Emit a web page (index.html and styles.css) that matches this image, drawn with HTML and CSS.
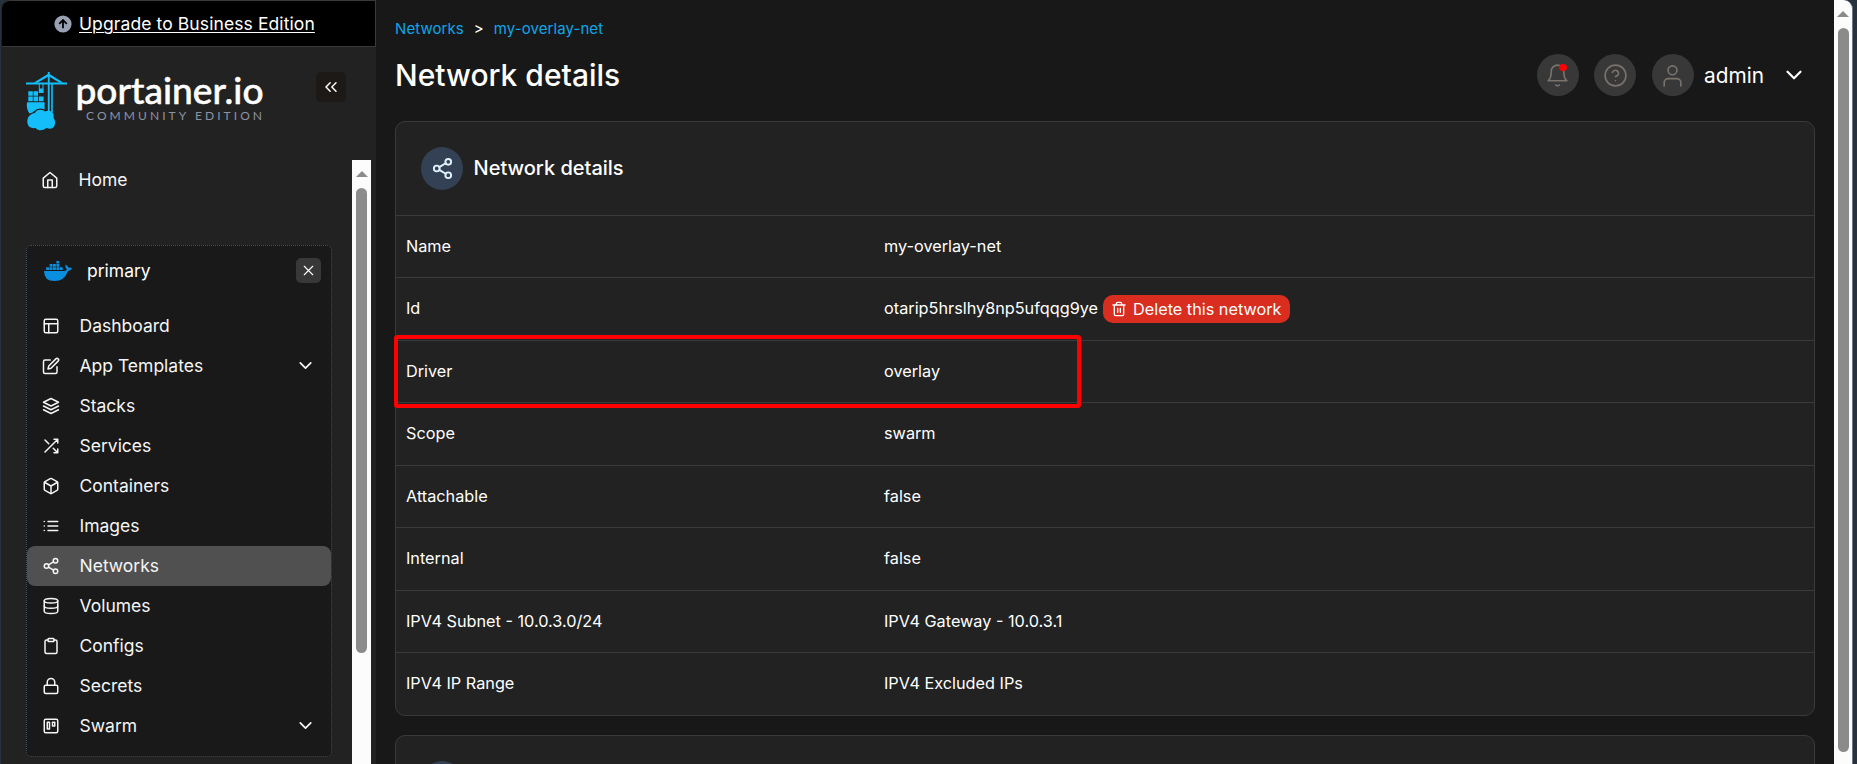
FILE: index.html
```html
<!DOCTYPE html>
<html lang="en">
<head>
<meta charset="utf-8">
<title>Network details</title>
<link rel="stylesheet" href="styles.css">
</head>
<body>
<svg class="defs" aria-hidden="true">
  <symbol id="home" viewBox="0 0 24 24"><path d="M3 9.5 12 2l9 7.5V20a2 2 0 0 1-2 2H5a2 2 0 0 1-2-2Z"/><path d="M9 22V12h6v10"/></symbol>
  <symbol id="layout" viewBox="0 0 24 24"><rect x="3" y="3" width="18" height="18" rx="2"/><path d="M3 9h18M9 21V9"/></symbol>
  <symbol id="edit" viewBox="0 0 24 24"><path d="M11 4H4a2 2 0 0 0-2 2v14a2 2 0 0 0 2 2h14a2 2 0 0 0 2-2v-7"/><path d="M18.5 2.5a2.12 2.12 0 0 1 3 3L12 15l-4 1 1-4Z"/></symbol>
  <symbol id="layers" viewBox="0 0 24 24"><path d="m12 2 10 5-10 5L2 7Z"/><path d="m2 17 10 5 10-5M2 12l10 5 10-5"/></symbol>
  <symbol id="shuffle" viewBox="0 0 24 24"><path d="M16 3h5v5M4 20 21 3M21 16v5h-5M15 15l6 6M4 4l5 5"/></symbol>
  <symbol id="box" viewBox="0 0 24 24"><path d="M21 16V8a2 2 0 0 0-1-1.73l-7-4a2 2 0 0 0-2 0l-7 4A2 2 0 0 0 3 8v8a2 2 0 0 0 1 1.73l7 4a2 2 0 0 0 2 0l7-4A2 2 0 0 0 21 16Z"/><path d="M3.3 7 12 12l8.7-5M12 22V12"/></symbol>
  <symbol id="list" viewBox="0 0 24 24"><path d="M8 6h13M8 12h13M8 18h13M3 6h.01M3 12h.01M3 18h.01"/></symbol>
  <symbol id="share" viewBox="0 0 24 24"><circle cx="18" cy="5" r="3"/><circle cx="6" cy="12" r="3"/><circle cx="18" cy="19" r="3"/><path d="m8.6 13.5 6.8 4M15.4 6.5l-6.8 4"/></symbol>
  <symbol id="database" viewBox="0 0 24 24"><ellipse cx="12" cy="5" rx="9" ry="3"/><path d="M21 12c0 1.66-4 3-9 3s-9-1.34-9-3"/><path d="M3 5v14c0 1.66 4 3 9 3s9-1.34 9-3V5"/></symbol>
  <symbol id="clipboard" viewBox="0 0 24 24"><path d="M16 4h2a2 2 0 0 1 2 2v14a2 2 0 0 1-2 2H6a2 2 0 0 1-2-2V6a2 2 0 0 1 2-2h2"/><rect x="8" y="2" width="8" height="4" rx="1"/></symbol>
  <symbol id="lock" viewBox="0 0 24 24"><rect x="3" y="11" width="18" height="11" rx="2"/><path d="M7 11V7a5 5 0 0 1 10 0v4"/></symbol>
  <symbol id="trello" viewBox="0 0 24 24"><rect x="3" y="3" width="18" height="18" rx="2"/><path d="M7 7h3v9H7ZM14 7h3v5h-3Z"/></symbol>
  <symbol id="chevron" viewBox="0 0 24 24"><path d="m6 9 6 6 6-6"/></symbol>
  <symbol id="chevrons" viewBox="0 0 24 24"><path d="m11 17-5-5 5-5M18 17l-5-5 5-5"/></symbol>
  <symbol id="cross" viewBox="0 0 24 24"><path d="M18 6 6 18M6 6l12 12"/></symbol>
  <symbol id="bell" viewBox="0 0 24 24"><path d="M18 8A6 6 0 0 0 6 8c0 7-3 9-3 9h18s-3-2-3-9M13.73 21a2 2 0 0 1-3.46 0"/></symbol>
  <symbol id="help" viewBox="0 0 24 24"><circle cx="12" cy="12" r="10"/><path d="M9.09 9a3 3 0 0 1 5.83 1c0 2-3 3-3 3M12 17h.01"/></symbol>
  <symbol id="user" viewBox="0 0 24 24"><path d="M20 22v-3a4 4 0 0 0-4-4H8a4 4 0 0 0-4 4v3"/><circle cx="12" cy="7" r="4.3"/></symbol>
  <symbol id="trash" viewBox="0 0 24 24"><path d="M3 6h18M19 6v14a2 2 0 0 1-2 2H7a2 2 0 0 1-2-2V6M8 6V4a2 2 0 0 1 2-2h4a2 2 0 0 1 2 2v2M10 11v6M14 11v6"/></symbol>
</svg>
<div class="window">
  <aside class="sidebar">
    <div class="upgrade">
      <svg class="upgrade-icon" viewBox="0 0 18 18"><circle cx="9" cy="9" r="8.6" fill="#98a2b3"/><path d="M9 13.3V5M5.2 8.8 9 5l3.8 3.8" fill="none" stroke="#000" stroke-width="1.8"/></svg>
      <a>Upgrade to Business Edition</a>
    </div>
    <div class="brand">
      <svg class="logo" viewBox="0 0 250 62">
        <g fill="#13bef9">
          <path d="M21.8 0h1.9v12h-1.9zM0 10.6h41v2H0zM21.8 12h1.9v28h-1.9zM25.2 12h1.6v28h-1.6z"/>
          <path d="M22.7 1.6 37.5 10.8h-4L22.7 4.2 11.5 10.8h-4Z"/>
          <path d="M12.8 12h1v5h-1zM16.5 12h1v5h-1zM12.8 16.6h4.8V21h-4.8z"/>
          <path d="M2.3 19.2h4.5v4.6H2.3zM7.6 19.2H12v4.6H7.6zM2.3 24.6h4.5v4.6H2.3zM7.6 24.6H12v4.6H7.6zM12.8 24.6h4.8v4.6h-4.8z"/>
          <path d="M1 30.2h17.6v7.3Q12 34.8 8 39.2 6.5 41 3.5 41.5 0 37 1 30.2Z"/>
          <path d="M5 42.5Q6.5 41 8.8 41 10 38 14.3 37.8 17.5 37.8 19 39.5 21 38.3 23.5 38.8 28.5 40 27.6 45.5 30.3 50.5 28.2 54.5 25.5 58 20.5 56 17 58.7 13.5 58.2 11 58 9.5 56 3 57 1.5 51.5.5 45 5 42.5Z"/>
        </g>
        <text class="logo-name" x="49.5" y="31.5" textLength="188" lengthAdjust="spacingAndGlyphs">portainer.io</text>
        <text class="logo-edition" x="60" y="48" textLength="176" lengthAdjust="spacing">COMMUNITY EDITION</text>
      </svg>
      <button class="collapse"><svg class="icon"><use href="#chevrons"/></svg></button>
    </div>
    <div class="side-body">
      <nav class="nav">
        <a class="item home"><svg class="icon"><use href="#home"/></svg><span>Home</span></a>
        <div class="env">
          <div class="env-head">
            <svg class="whale" viewBox="0 0 28 21" fill="#0a8fe0"><path d="M0 10h20.5q2-.3 2.4-1.8Q20.5 6 21.8 3.4 24 4.6 24.3 6.6 26.5 6 28 7.3 27 10 23.8 10.2 20.5 20 10.5 20 0 20 0 10Z"/><path d="M2.2 6.2h2.9v2.9H2.2zM5.6 6.2h2.9v2.9H5.6zM9 6.2h2.9v2.9H9zM12.4 6.2h2.9v2.9h-2.9zM15.8 6.2h2.9v2.9h-2.9zM5.6 3h2.9v2.7H5.6zM9 3h2.9v2.7H9zM12.4 3h2.9v2.7h-2.9zM12.4 0h2.9v2.5h-2.9z"/></svg>
            <span class="env-name">primary</span>
            <button class="close"><svg class="icon"><use href="#cross"/></svg></button>
          </div>
          <a class="item"><svg class="icon"><use href="#layout"/></svg><span>Dashboard</span></a>
          <a class="item"><svg class="icon"><use href="#edit"/></svg><span>App Templates</span><svg class="icon more"><use href="#chevron"/></svg></a>
          <a class="item"><svg class="icon"><use href="#layers"/></svg><span>Stacks</span></a>
          <a class="item"><svg class="icon"><use href="#shuffle"/></svg><span>Services</span></a>
          <a class="item"><svg class="icon"><use href="#box"/></svg><span>Containers</span></a>
          <a class="item"><svg class="icon"><use href="#list"/></svg><span>Images</span></a>
          <a class="item active"><svg class="icon"><use href="#share"/></svg><span>Networks</span></a>
          <a class="item"><svg class="icon"><use href="#database"/></svg><span>Volumes</span></a>
          <a class="item"><svg class="icon"><use href="#clipboard"/></svg><span>Configs</span></a>
          <a class="item"><svg class="icon"><use href="#lock"/></svg><span>Secrets</span></a>
          <a class="item"><svg class="icon"><use href="#trello"/></svg><span>Swarm</span><svg class="icon more"><use href="#chevron"/></svg></a>
        </div>
      </nav>
      <div class="scroll side-scroll"><i class="arrow"></i><i class="thumb"></i></div>
    </div>
  </aside>
  <main class="main">
    <div class="crumbs"><a>Networks</a><span>&gt;</span><a>my-overlay-net</a></div>
    <header class="top">
      <h1>Network details</h1>
      <div class="actions">
        <span class="round bell"><svg class="icon"><use href="#bell"/></svg><i class="dot"></i></span>
        <span class="round"><svg class="icon"><use href="#help"/></svg></span>
        <span class="round"><svg class="icon"><use href="#user"/></svg></span>
        <span class="user-name">admin</span>
        <svg class="icon user-more"><use href="#chevron"/></svg>
      </div>
    </header>
    <section class="card">
      <div class="card-head"><span class="badge"><svg class="icon"><use href="#share"/></svg></span><h2>Network details</h2></div>
      <dl class="rows">
        <div class="row"><dt>Name</dt><dd>my-overlay-net</dd></div>
        <div class="row"><dt>Id</dt><dd>otarip5hrslhy8np5ufqqg9ye<button class="delete"><svg class="icon"><use href="#trash"/></svg><span>Delete this network</span></button></dd></div>
        <div class="row marked"><dt>Driver</dt><dd>overlay</dd></div>
        <div class="row"><dt>Scope</dt><dd>swarm</dd></div>
        <div class="row"><dt>Attachable</dt><dd>false</dd></div>
        <div class="row"><dt>Internal</dt><dd>false</dd></div>
        <div class="row"><dt>IPV4 Subnet - 10.0.3.0/24</dt><dd>IPV4 Gateway - 10.0.3.1</dd></div>
        <div class="row"><dt>IPV4 IP Range</dt><dd>IPV4 Excluded IPs</dd></div>
      </dl>
    </section>
    <section class="card next"><div class="card-head"><span class="badge"></span></div></section>
  </main>
  <div class="scroll page-scroll"><i class="arrow"></i><i class="thumb"></i></div>
</div>
</body>
</html>
```
FILE: styles.css
```css
*, *::after { box-sizing: border-box; }
html { background: #27323f; }
body {
  margin: 0;
  height: 764px;
  overflow: hidden;
  font-family: Inter, "Liberation Sans", sans-serif;
  color: #fff;
  background: #27323f;
}
h1, h2, dl, dt, dd { margin: 0; font-weight: 500; }
button { border: 0; padding: 0; margin: 0; font: inherit; color: inherit; }
.defs { display: none; }
.icon { fill: none; stroke: currentColor; stroke-width: 2; stroke-linecap: round; stroke-linejoin: round; flex: none; }
.window { display: flex; height: 764px; padding: 0 4px 0 1px; }

/* Sidebar */
.sidebar { width: 375px; display: flex; flex-direction: column; background: #222; border-radius: 8px 0 0 0; overflow: hidden; flex: none; }
.upgrade {
  height: 47px; margin-left: 1px; padding: 0 0 0 52px;
  display: flex; align-items: center; gap: 7px;
  background: #000; border: 1px solid #3a3a3a; border-left: 0; border-radius: 8px 0 0 0;
  font-size: 17.5px; letter-spacing: 0.1px; flex: none;
}
.upgrade-icon { width: 18px; height: 18px; }
.upgrade a { text-decoration: underline; text-decoration-thickness: 1px; text-underline-offset: 2px; }
.brand { height: 113px; display: flex; padding: 25px 0 0 25px; flex: none; }
.logo { width: 250px; height: 62px; overflow: visible; }
.logo-name { font: 500 36px/1 Lato, sans-serif; fill: #fff; stroke: #fff; stroke-width: 0.5; }
.logo-edition { font: 400 12px/1 Lato, sans-serif; fill: #8b93a5; }
.collapse { width: 30px; height: 30px; margin-left: 40px; border-radius: 5px; background: #1c1917; display: grid; place-items: center; }
.collapse .icon { width: 20px; height: 20px; stroke-width: 1.8; }
.side-body { flex: 1; display: flex; min-height: 0; }
.nav { width: 351px; padding-left: 25px; }
.item { height: 40px; display: flex; align-items: center; padding: 0 0 1px 14.5px; font-size: 17.5px; color: #f5f5f5; }
.item .icon { width: 18px; height: 18px; margin-right: 20px; }
.item .more { width: 21px; height: 21px; margin: 0 15px 0 auto; }
.home { margin-bottom: 45px; }
.env { width: 306px; height: 512px; border: 1px dotted #41505f; border-radius: 5px; background: #191919; }
.env-head { height: 60px; display: flex; padding: 12px 10px 0 17px; }
.whale { width: 28px; height: 21px; margin-top: 3px; }
.env-name { font-size: 17.5px; line-height: 26px; margin-left: 15px; }
.close { width: 25px; height: 25px; margin-left: auto; border-radius: 5px; background: #383838; display: grid; place-items: center; }
.close .icon { width: 17px; height: 17px; stroke-width: 1.6; }
.active { background: #505050; border-radius: 8px; }

/* Scrollbars */
.scroll { background: #fcfcfc; flex: none; display: flex; flex-direction: column; align-items: center; }
.arrow { border: 6px solid transparent; border-top: 0; border-bottom: 6px solid #8b8b8b; margin-top: 11px; }
.thumb { width: 11px; border-radius: 6px; background: #8b8b8b; margin-top: 11px; }
.side-scroll { width: 19px; }
.side-scroll .thumb { height: 465px; }
.page-scroll { width: 19px; border-radius: 0 9px 0 0; border-right: 1px solid #6f7780; }
.page-scroll .thumb { height: 724px; }

/* Main */
.main { flex: 1; min-width: 0; background: #181818; padding: 0 19px; overflow: hidden; }
.crumbs { display: flex; gap: 10px; padding-top: 19px; height: 46px; font-size: 15px; line-height: 20px; letter-spacing: 0.08px; }
.crumbs a { color: #0ea5e9; }
.top { display: flex; justify-content: space-between; height: 75px; }
.top h1 { font-size: 30px; line-height: 58px; }
.actions { display: flex; align-items: center; height: 58px; margin-right: 8px; }
.round { width: 42px; height: 42px; border-radius: 50%; background: #383838; color: #78716c; display: grid; place-items: center; margin-right: 15.5px; position: relative; }
.round .icon { width: 25px; height: 25px; stroke-width: 1.6; }
.dot { position: absolute; left: 22px; top: 10px; width: 8px; height: 7px; border-radius: 50%; background: #f00; }
.round + .user-name { margin-left: -5px; }
.user-name { font-size: 20.8px; }
.user-more { width: 26px; height: 26px; margin-left: 17px; stroke-width: 2; }
.card { border: 1px solid #3a3a3a; border-radius: 10px; background: #222; }
.card-head { height: 92.75px; padding: 0 0 0 25px; display: flex; align-items: center; gap: 10.5px; }
.badge { width: 42px; height: 43px; border-radius: 50%; background: #344054; color: #e0f2fe; display: grid; place-items: center; }
.badge .icon { width: 23px; height: 23px; }
.card h2 { font-size: 20px; line-height: 24px; padding-bottom: 1px; }
.row { display: flex; height: 62.5px; align-items: center; padding: 0 0 1.5px 10px; border-top: 1px solid #3a3a3a; font-size: 16.25px; position: relative; }
.row dt { width: 478px; font-weight: 400; }
.row dd { font-weight: 400; display: flex; align-items: center; }
.delete { height: 28px; margin: 1.5px 0 0 5px; padding: 0 8px 0 8px; border-radius: 10px; background: #d92d20; display: flex; align-items: center; gap: 6px; }
.delete .icon { width: 16px; height: 16px; }
.marked::after { content: ""; position: absolute; left: -2px; top: -6px; width: 687px; height: 73px; border: 4px solid #f00; border-radius: 3px; z-index: 1; }
.next { margin-top: 19px; }
```
